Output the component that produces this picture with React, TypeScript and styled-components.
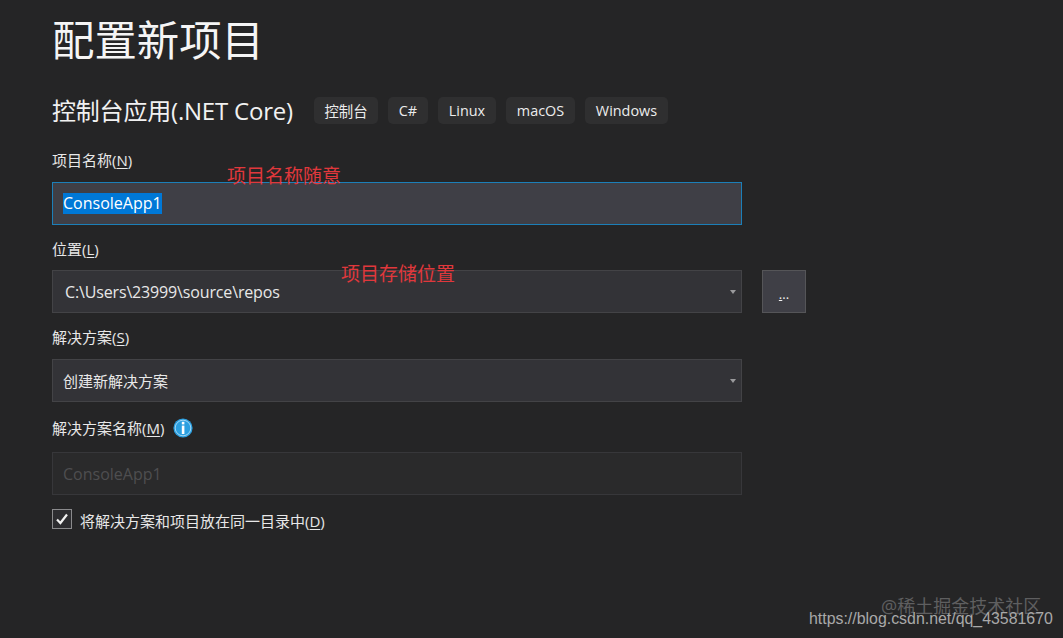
import React from "react";
import styled, { createGlobalStyle } from "styled-components";

const Global = createGlobalStyle`
  html, body { margin: 0; padding: 0; background: #252526; }
  body { font-family: "Open Sans", "Noto Sans CJK SC", sans-serif; color: #f1f1f1; }
`;

const Page = styled.main`
  position: relative;
  box-sizing: border-box;
  width: 1063px;
  height: 638px;
  overflow: hidden;
  padding: 8px 0 0 52px;
  background: #252526;
`;

const Title = styled.h1`
  margin: 0;
  height: 64px;
  font-size: 42.4px;
  line-height: 64px;
  font-weight: 400;
  color: #f5f5f5;
`;

const SubRow = styled.div`
  display: flex;
  align-items: center;
  gap: 10px;
  height: 28px;
  margin-top: 24px;
`;

const Subtitle = styled.h2`
  margin: 1px 11px 0 0;
  font-size: 24px;
  line-height: 28px;
  font-weight: 400;
  letter-spacing: -0.2px;
  white-space: nowrap;
  color: #f1f1f1;
`;

const Tag = styled.span<{ $w: number }>`
  display: flex;
  align-items: center;
  justify-content: center;
  box-sizing: border-box;
  width: ${(p) => p.$w}px;
  height: 27px;
  border-radius: 5px;
  background: #2f2f30;
  font-size: 14.4px;
  color: #ececec;
  white-space: nowrap;
`;

const LabelRow = styled.div<{ $top: number }>`
  display: flex;
  align-items: center;
  gap: 9px;
  height: 22px;
  margin-top: ${(p) => p.$top}px;
`;

const Label = styled.label`
  font-size: 15px;
  line-height: 22px;
  color: #e8e8e8;
  u { text-underline-offset: 2px; }
`;

const FieldRow = styled.div<{ $top: number }>`
  display: flex;
  gap: 20px;
  margin-top: ${(p) => p.$top}px;
`;

const TextField = styled.div<{ $active?: boolean; $disabled?: boolean }>`
  box-sizing: border-box;
  display: flex;
  align-items: center;
  width: 690px;
  height: 43px;
  padding-left: 10px;
  font-size: 16px;
  background: ${(p) => (p.$active ? "#3f3f46" : p.$disabled ? "#2a2a2b" : "#333337")};
  border: 1px solid ${(p) => (p.$active ? "#1c7fb8" : p.$disabled ? "#37373a" : "#434346")};
  color: ${(p) => (p.$disabled ? "#4e4e50" : "#f1f1f1")};
`;

const Selected = styled.span`
  background: #0078d7;
  color: #fff;
  line-height: 21px;
`;

const Select = styled.div<{ $inset?: number }>`
  box-sizing: border-box;
  display: flex;
  align-items: center;
  justify-content: space-between;
  width: 690px;
  height: 43px;
  padding: 0 5px 0 ${(p) => p.$inset ?? 10}px;
  background: #333337;
  border: 1px solid #434346;
  font-size: 15px;
  color: #e8e8e8;
`;

const PathText = styled.span`
  font-size: 16px;
  letter-spacing: -0.15px;
`;

const Caret = styled.span`
  width: 0;
  height: 0;
  border-left: 3.5px solid transparent;
  border-right: 3.5px solid transparent;
  border-top: 4px solid #9a9a9c;
`;

const Browse = styled.button`
  box-sizing: border-box;
  width: 44px;
  height: 43px;
  padding: 5px 0 0;
  background: #3f3f46;
  border: 1px solid #555558;
  color: #f1f1f1;
  font-family: inherit;
  font-size: 13px;
  line-height: 1;
  u { text-underline-offset: 1px; }
`;

const CheckRow = styled.div`
  display: flex;
  align-items: center;
  gap: 8px;
  height: 20px;
  margin-top: 14px;
`;

const CheckLabel = styled(Label)`
  margin-top: 4px;
`;

const CheckBox = styled.span`
  box-sizing: border-box;
  display: flex;
  align-items: center;
  justify-content: center;
  width: 20px;
  height: 20px;
  border: 1px solid #8a8a8c;
  background: #2d2d30;
`;

const Note = styled.span<{ $x: number; $y: number }>`
  position: absolute;
  left: ${(p) => p.$x}px;
  top: ${(p) => p.$y}px;
  font-size: 19px;
  line-height: 24px;
  color: #e0383c;
  white-space: nowrap;
`;

const WatermarkCn = styled.span`
  position: absolute;
  left: 881px;
  top: 594px;
  font-size: 18px;
  line-height: 24px;
  color: #5f5f60;
  white-space: nowrap;
`;

const WatermarkUrl = styled.span`
  position: absolute;
  left: 809px;
  top: 609px;
  font-family: "Liberation Sans", sans-serif;
  font-size: 15.9px;
  line-height: 20px;
  color: #a9a9a9;
  white-space: nowrap;
`;

const InfoIcon = () => (
  <svg width="20" height="20" viewBox="0 0 20 20" aria-hidden="true">
    <circle cx="10" cy="10" r="9.6" fill="#2b9fe0" />
    <circle cx="10" cy="10" r="7.8" fill="#2b9fe0" stroke="#bfe3f7" strokeWidth="0.8" />
    <rect x="8.8" y="3.8" width="2.6" height="2.6" fill="#fff" />
    <rect x="8.8" y="7.6" width="2.6" height="8.4" fill="#fff" />
  </svg>
);

const CheckMark = () => (
  <svg width="14" height="14" viewBox="0 0 14 14" aria-hidden="true">
    <path d="M2 7.5 L5.4 11 L12 2.5" fill="none" stroke="#f1f1f1" strokeWidth="2.2" />
  </svg>
);

const tags: [string, number][] = [
  ["控制台", 64],
  ["C#", 40],
  ["Linux", 58],
  ["macOS", 69],
  ["Windows", 83],
];

export default function App() {
  return (
    <Page>
      <Global />
      <Title>配置新项目</Title>
      <SubRow>
        <Subtitle>控制台应用(.NET Core)</Subtitle>
        {tags.map(([t, w]) => (
          <Tag key={t} $w={w}>{t}</Tag>
        ))}
      </SubRow>
      <LabelRow $top={25}>
        <Label>项目名称(<u>N</u>)</Label>
      </LabelRow>
      <FieldRow $top={11}>
        <TextField $active>
          <Selected>ConsoleApp1</Selected>
        </TextField>
      </FieldRow>
      <LabelRow $top={13}>
        <Label>位置(<u>L</u>)</Label>
      </LabelRow>
      <FieldRow $top={10}>
        <Select $inset={12}>
          <PathText>C:\Users\23999\source\repos</PathText>
          <Caret />
        </Select>
        <Browse type="button"><u>.</u>..</Browse>
      </FieldRow>
      <LabelRow $top={13}>
        <Label>解决方案(<u>S</u>)</Label>
      </LabelRow>
      <FieldRow $top={11}>
        <Select>
          创建新解决方案
          <Caret />
        </Select>
      </FieldRow>
      <LabelRow $top={15}>
        <Label>解决方案名称(<u>M</u>)</Label>
        <InfoIcon />
      </LabelRow>
      <FieldRow $top={13}>
        <TextField $disabled>ConsoleApp1</TextField>
      </FieldRow>
      <CheckRow>
        <CheckBox>
          <CheckMark />
        </CheckBox>
        <CheckLabel>将解决方案和项目放在同一目录中(<u>D</u>)</CheckLabel>
      </CheckRow>
      <Note $x={227} $y={164}>项目名称随意</Note>
      <Note $x={341} $y={262}>项目存储位置</Note>
      <WatermarkCn>@稀土掘金技术社区</WatermarkCn>
      <WatermarkUrl>https://blog.csdn.net/qq_43581670</WatermarkUrl>
    </Page>
  );
}
